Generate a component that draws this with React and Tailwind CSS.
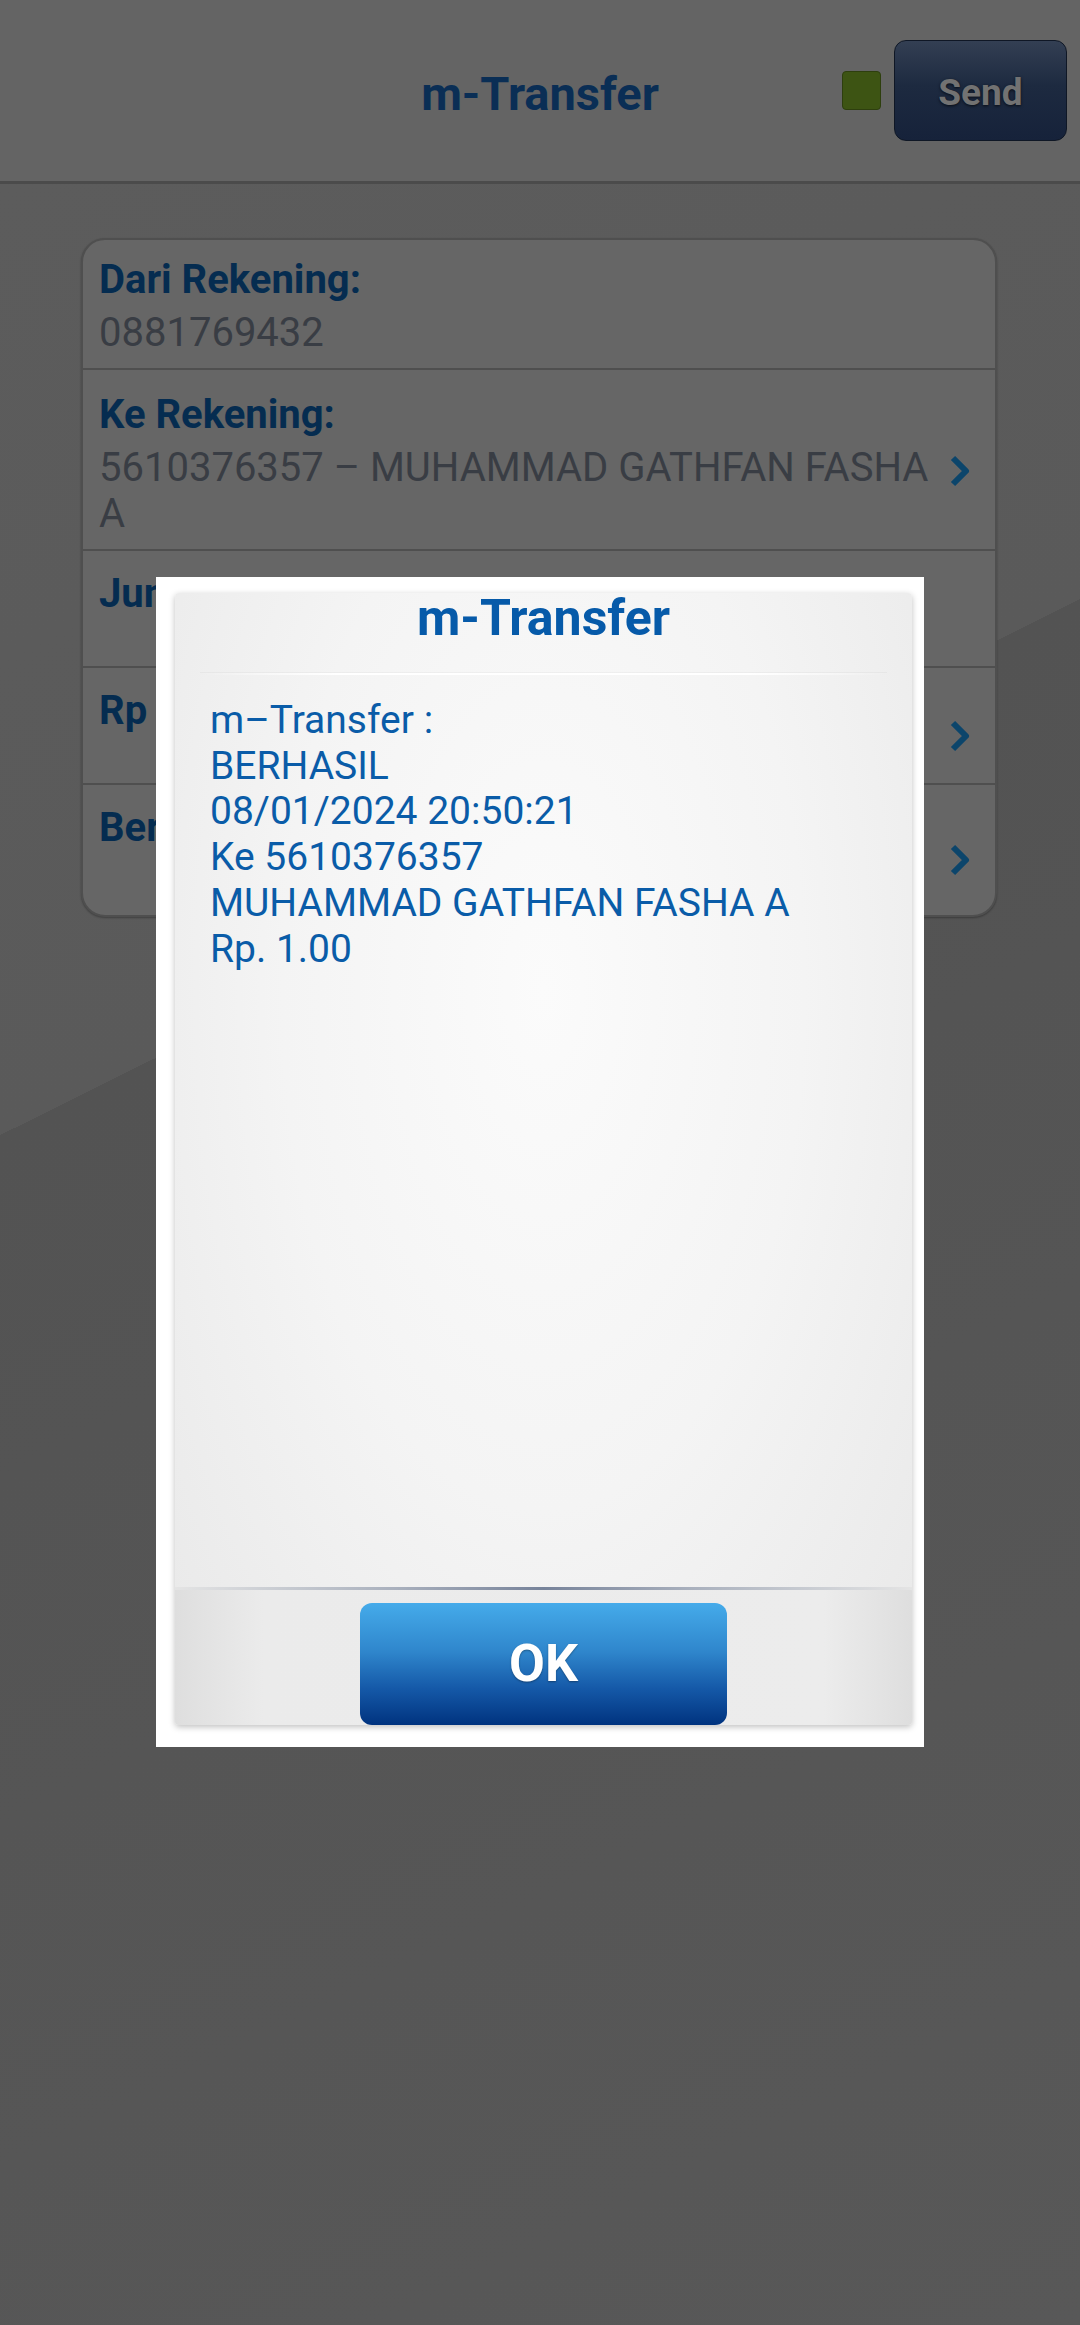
import React from "react";

function Chevron() {
  return (
    <svg width="24" height="34" viewBox="0 0 24 34" fill="none" className="shrink-0 self-center">
      <path d="M5 4 L18 17 L5 30" stroke="#0c456b" strokeWidth="6" strokeLinejoin="round" />
    </svg>
  );
}

function Row({ label, value, extra, chevron, last }) {
  return (
    <div className={`${extra} flex items-start pl-[16px] pr-[23px] ${last ? "" : "border-b-2 border-[#4f4f4f]"}`}>
      <div className="flex-1 mr-[8px]">
        <div className="text-[40px] leading-[46px] font-bold text-[#052c50]">{label}</div>
        {value && <div className="mt-[7px] text-[40px] leading-[46px] text-[#393d44]">{value}</div>}
      </div>
      {chevron && <Chevron />}
    </div>
  );
}

export default function App() {
  return (
    <div className="relative w-[1080px] h-[2325px] flex flex-col overflow-hidden font-['Roboto',sans-serif]">
      {/* Header */}
      <div className="h-[184px] shrink-0 grid grid-cols-[1fr_auto_1fr] items-center bg-[#646464] border-b-[3px] border-[#4b4b4b]">
        <div />
        <div className="text-[47px] font-bold text-[#0a2e55] leading-none pt-[6px]">m-Transfer</div>
        <div className="flex items-center justify-end gap-[13px] pr-[13px]">
          <div className="w-[39px] h-[39px] rounded-[4px] bg-[#3d5413] border border-[#2e3f0e]" />
          <div className="w-[173px] h-[101px] rounded-[12px] border border-[#0f1725] bg-[linear-gradient(to_bottom,#333f53,#1d2a40_45%,#16223a)] flex items-center justify-center pt-[5px]">
            <span className="text-[37px] font-bold text-[#727272] [text-shadow:0_1px_3px_rgba(0,0,0,0.7)]">Send</span>
          </div>
        </div>
      </div>

      {/* Body */}
      <div className="flex-1 bg-[linear-gradient(153.6deg,#5c5c5c_0px,#5a5a5a_852px,#535353_852px,#585858_100%)]">
        <div className="mt-[54px] ml-[81px] w-[916px] rounded-[24px] border-2 border-[#4f4f4f] bg-[#666666] overflow-hidden shadow-[0_1px_2px_rgba(0,0,0,0.3)]">
          <Row extra="h-[130px] pt-[17px]" label="Dari Rekening:" value="0881769432" />
          <Row
            extra="h-[181px] pt-[22px]"
            label="Ke Rekening:"
            value="5610376357 – MUHAMMAD GATHFAN FASHA A"
            chevron
          />
          <Row extra="h-[117px] pt-[20px]" label="Jumlah:" />
          <Row extra="h-[117px] pt-[20px]" label="Rp" chevron />
          <Row extra="h-[130px] pt-[20px]" label="Berita:" chevron last />
        </div>
      </div>

      {/* Dialog */}
      <div className="absolute left-[156px] top-[577px] w-[768px] h-[1170px] bg-white pl-[19px] pr-[12px] pt-[16px] pb-[22px]">
        <div className="h-full flex flex-col rounded-[4px] shadow-[0_2px_6px_rgba(0,0,0,0.25)] bg-[radial-gradient(ellipse_at_50%_35%,#fbfbfb_0%,#f4f4f4_50%,#e8e8e8_100%)]">
          <div className="h-[80px] shrink-0 text-center text-[50px] leading-[50px] font-bold text-[#065aa9]">
            m-Transfer
          </div>
          <div className="h-[2px] mx-[25px] bg-[linear-gradient(to_right,transparent,#ffffff_20%,#ffffff_80%,transparent)] shadow-[0_-1px_0_rgba(0,0,0,0.03)]" />
          <div className="flex-1 pt-[23px] pl-[35px] text-[39px] leading-[45.7px] text-[#0a5ca8]">
            <div>m–Transfer :</div>
            <div>BERHASIL</div>
            <div>08/01/2024 20:50:21</div>
            <div>Ke 5610376357</div>
            <div>MUHAMMAD GATHFAN FASHA A</div>
            <div>Rp. 1.00</div>
          </div>
          <div className="h-[3px] shrink-0 bg-[linear-gradient(to_right,#e4e4e4,#a9b0bd_30%,#77839a_50%,#a9b0bd_70%,#e4e4e4)]" />
          <div className="h-[135px] shrink-0 pt-[13px] flex justify-center rounded-b-[4px] bg-[linear-gradient(to_right,#dedede,#ebebeb_12%,#ececec_88%,#dedede)]">
            <div className="w-[367px] h-[122px] rounded-[12px] bg-[linear-gradient(to_bottom,#45abea_0%,#2f86cc_40%,#1559a8_70%,#00337f_100%)] flex items-center justify-center">
              <span className="text-[52px] font-bold text-white leading-none [text-shadow:0_1px_2px_rgba(0,0,0,0.35)]">OK</span>
            </div>
          </div>
        </div>
      </div>
    </div>
  );
}
